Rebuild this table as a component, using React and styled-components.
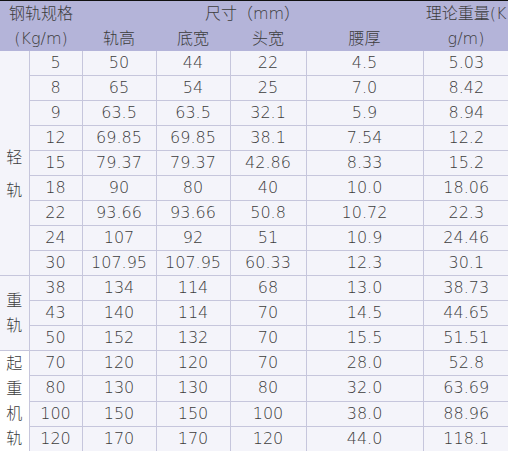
import React from 'react'
import styled, { createGlobalStyle } from 'styled-components'

const GlobalStyle = createGlobalStyle`
  html, body {
    margin: 0;
    padding: 0;
    background: #ffffff;
    overflow: hidden;
  }
`

const Wrap = styled.div`
  width: 509px;
  border-top: 1px solid #111;
  border-bottom: 2px solid #111;
`

const Table = styled.table`
  width: 509px;
  table-layout: fixed;
  border-collapse: collapse;
  font-family: "DejaVu Sans", "Noto Sans CJK SC", sans-serif;
  font-size: 16px;
  font-weight: 300;
  color: #3c3c3c;
`

const HeadCell = styled.th`
  background: #b4b4d9;
  font-weight: 300;
  height: 25px;
  padding: 0;
  text-align: center;
  vertical-align: middle;
  line-height: 25px;
  white-space: nowrap;
  overflow: hidden;
`

const Cell = styled.td`
  background: ${(p) => (p.$white ? '#ffffff' : '#f4f4fa')};
  border: 1px solid #c6c6dc;
  border-top: ${(p) => (p.$first ? 'none' : '1px solid #c6c6dc')};
  height: 24px;
  padding: 0;
  text-align: center;
  vertical-align: middle;
  line-height: 24px;
  white-space: nowrap;
  &:first-child {
    border-left: none;
  }
  &:last-child {
    border-right: none;
  }
`

const Stack = styled.div`
  display: flex;
  flex-direction: column;
  align-items: center;
  line-height: ${(p) => p.$lh}px;
  padding-top: ${(p) => p.$pt || 0}px;
`

const widths = [29, 53, 74, 74, 76, 117, 86]

const groups = [
  {
    name: ['轻', '轨'],
    lh: 33,
    pt: 22,
    rows: [
      ['5', '50', '44', '22', '4.5', '5.03'],
      ['8', '65', '54', '25', '7.0', '8.42'],
      ['9', '63.5', '63.5', '32.1', '5.9', '8.94'],
      ['12', '69.85', '69.85', '38.1', '7.54', '12.2'],
      ['15', '79.37', '79.37', '42.86', '8.33', '15.2'],
      ['18', '90', '80', '40', '10.0', '18.06'],
      ['22', '93.66', '93.66', '50.8', '10.72', '22.3'],
      ['24', '107', '92', '51', '10.9', '24.46'],
      ['30', '107.95', '107.95', '60.33', '12.3', '30.1'],
    ],
  },
  {
    name: ['重', '轨'],
    lh: 25,
    rows: [
      ['38', '134', '114', '68', '13.0', '38.73'],
      ['43', '140', '114', '70', '14.5', '44.65'],
      ['50', '152', '132', '70', '15.5', '51.51'],
    ],
  },
  {
    name: ['起', '重', '机', '轨'],
    lh: 25,
    white: true,
    rows: [
      ['70', '120', '120', '70', '28.0', '52.8'],
      ['80', '130', '130', '80', '32.0', '63.69'],
      ['100', '150', '150', '100', '38.0', '88.96'],
      ['120', '170', '170', '120', '44.0', '118.1'],
    ],
  },
]

const App = () => {
  return (
    <>
      <GlobalStyle />
      <Wrap>
        <Table>
          <colgroup>
            {widths.map((w, i) => (
              <col key={i} style={{ width: w }} />
            ))}
          </colgroup>
          <thead>
            <tr>
              <HeadCell colSpan={2} rowSpan={2}>
                钢轨规格<br />(Kg/m)
              </HeadCell>
              <HeadCell colSpan={4}>尺寸（mm）</HeadCell>
              <HeadCell rowSpan={2}>
                理论重量(K<br />g/m)
              </HeadCell>
            </tr>
            <tr>
              <HeadCell>轨高</HeadCell>
              <HeadCell>底宽</HeadCell>
              <HeadCell>头宽</HeadCell>
              <HeadCell>腰厚</HeadCell>
            </tr>
          </thead>
          <tbody>
            {groups.map((g, gi) =>
              g.rows.map((r, ri) => (
                <tr key={`${gi}-${ri}`}>
                  {ri === 0 && (
                    <Cell rowSpan={g.rows.length} $white={g.white} $first={gi === 0}>
                      <Stack $lh={g.lh} $pt={g.pt}>
                        {g.name.map((c, ci) => (
                          <span key={ci}>{c}</span>
                        ))}
                      </Stack>
                    </Cell>
                  )}
                  {r.map((v, vi) => (
                    <Cell key={vi} $first={gi === 0 && ri === 0}>
                      {v}
                    </Cell>
                  ))}
                </tr>
              ))
            )}
          </tbody>
        </Table>
      </Wrap>
    </>
  )
}

export default App
